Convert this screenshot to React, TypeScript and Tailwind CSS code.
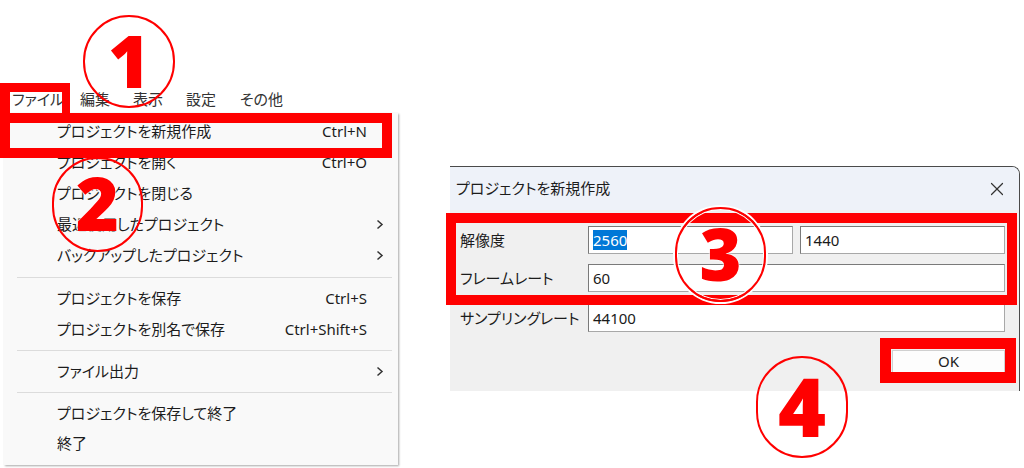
import { X } from 'lucide-react'

const menuBar = [
  { label: 'ファイル', w: 'w-[68px]' },
  { label: '編集', w: 'w-[53px]' },
  { label: '表示', w: 'w-[53px]' },
  { label: '設定', w: 'w-[54px]' },
  { label: 'その他', w: 'w-[60px]' },
]

type Item = { label?: string; shortcut?: string; sub?: boolean; sep?: boolean; h?: string }

const fileMenu: Item[] = [
  { label: 'プロジェクトを新規作成', shortcut: 'Ctrl+N' },
  { label: 'プロジェクトを開く', shortcut: 'Ctrl+O' },
  { label: 'プロジェクトを閉じる' },
  { label: '最近使用したプロジェクト', sub: true },
  { label: 'バックアップしたプロジェクト', sub: true },
  { sep: true, h: 'h-[12px]' },
  { label: 'プロジェクトを保存', shortcut: 'Ctrl+S' },
  { label: 'プロジェクトを別名で保存', shortcut: 'Ctrl+Shift+S' },
  { sep: true, h: 'h-[11px]' },
  { label: 'ファイル出力', sub: true },
  { sep: true, h: 'h-[11px]' },
  { label: 'プロジェクトを保存して終了' },
  { label: '終了', h: 'h-[28px]' },
]

function Chevron() {
  return (
    <svg width="8" height="11" viewBox="0 0 8 11" fill="none">
      <path d="M1.5 1.5 L6 5.5 L1.5 9.5" stroke="#333" strokeWidth="1.5" />
    </svg>
  )
}

function Field({ value, selected }: { value: string; selected?: boolean }) {
  return (
    <div className="h-[28px] flex-1 flex items-center bg-white border border-[#a8a8a8] border-t-[#7a7a7a] border-l-[#7a7a7a] pl-[4px] text-[15px] text-[#1a1a1a]">
      {selected ? <span className="bg-[#0078d7] text-white leading-[20px]">{value}</span> : value}
    </div>
  )
}

export default function App() {
  return (
    <div className="relative w-[1024px] h-[468px] overflow-hidden bg-white flex font-['Noto_Sans','Noto_Sans_CJK_JP',sans-serif] [font-feature-settings:'palt']">
      {/* left: menu */}
      <div className="w-[400px] flex flex-col pt-[84px]">
        <div className="h-[29px] flex items-center pl-[12px] pt-[2px] text-[15px] text-[#333]">
          {menuBar.map((m) => (
            <div key={m.label} className={m.w}>
              {m.label}
            </div>
          ))}
        </div>
        <div className="ml-[4px] w-[394px] bg-[#f9f9f9] pt-[3px] pb-[8px] shadow-[1px_1px_2px_rgba(0,0,0,0.35)] text-[15px] text-[#1c1c1c]">
          {fileMenu.map((it, i) =>
            it.sep ? (
              <div key={i} className={`${it.h} flex items-center pl-[13px] pr-[6px]`}>
                <div className="h-px w-full bg-[#dcdcdc]" />
              </div>
            ) : (
              <div key={i} className={`${it.h ?? 'h-[31px]'} flex items-center pl-[53px] pr-[14px]`}>
                <span className="flex-1">{it.label}</span>
                {it.shortcut && <span className="mr-[1px]">{it.shortcut}</span>}
                <span className="w-[16px] flex justify-end">{it.sub && <Chevron />}</span>
              </div>
            )
          )}
        </div>
      </div>

      {/* right: dialog */}
      <div className="pl-[50px] pt-[166px]">
        <div className="w-[570px] border-t border-r border-[#4a4a4a] rounded-tr-[8px] overflow-hidden">
          <div className="h-[43px] bg-[#eef2f9] flex items-center justify-between pl-[6px] pr-[11px] text-[15px] text-[#1c1c1c]">
            <span>プロジェクトを新規作成</span>
            <X size={22} strokeWidth={1.3} color="#333" />
          </div>
          <div className="bg-[#f0f0f0] pt-[16px] pb-[18px] pl-[10px] pr-[14px] flex flex-col text-[15px] text-[#1c1c1c]">
            <div className="flex items-center">
              <span className="w-[128px]">解像度</span>
              <div className="flex flex-1 gap-[7px]">
                <div className="w-[205px] flex">
                  <Field value="2560" selected />
                </div>
                <Field value="1440" />
              </div>
            </div>
            <div className="flex items-center mt-[10px]">
              <span className="w-[128px]">フレームレート</span>
              <Field value="60" />
            </div>
            <div className="flex items-center mt-[12px]">
              <span className="w-[128px]">サンプリングレート</span>
              <Field value="44100" />
            </div>
            <div className="flex justify-end mt-[18px]">
              <div className="w-[113px] h-[23px] bg-[#fdfdfd] border border-[#d0d0d0] flex items-center justify-center text-[15px]">
                OK
              </div>
            </div>
          </div>
        </div>
      </div>

      {/* red annotation boxes */}
      <div className="absolute left-0 top-[83px] w-[70px] h-[40px] border-[#ff0000] border-l-[10px] border-r-[8px] border-t-[9px]" />
      <div className="absolute left-0 top-[113px] w-[392px] h-[45px] border-[10px] border-[#ff0000]" />
      <div className="absolute left-[446px] top-[213px] w-[571px] h-[92px] border-[10px] border-[#ff0000]" />
      <div className="absolute left-[880px] top-[338px] w-[136px] h-[45px] border-[11px] border-[#ff0000]" />

      {/* circled step numbers */}
      <div className="absolute left-[83px] top-[15px] w-[92px] h-[93px] rounded-full border-2 border-[#ff0000] flex items-center justify-center">
        <span className="text-[72px] leading-none font-black text-[#ff0000] -translate-y-[2px]">1</span>
      </div>
      <div className="absolute left-[52px] top-[157px] w-[91px] h-[95px] rounded-full border-2 border-[#ff0000] flex items-center justify-center">
        <span className="text-[74px] leading-none font-black text-[#ff0000] -translate-y-[2px] [text-shadow:0_0_2px_#fff,0_0_2px_#fff,0_0_1px_#fff]">2</span>
      </div>
      <div className="absolute left-[675px] top-[207px] w-[91px] h-[95px] rounded-full border-2 border-[#ff0000] shadow-[0_0_0_2px_#fff,inset_0_0_0_1px_#fff] flex items-center justify-center">
        <span className="text-[72px] leading-none font-black text-[#ff0000] -translate-y-[2px] [text-shadow:0_0_2px_#fff,0_0_2px_#fff]">3</span>
      </div>
      <div className="absolute left-[756px] top-[356px] w-[92px] h-[102px] rounded-full border-2 border-[#ff0000] flex items-center justify-center">
        <span className="text-[82px] leading-none font-black text-[#ff0000] -translate-y-[2px]">4</span>
      </div>
    </div>
  )
}
